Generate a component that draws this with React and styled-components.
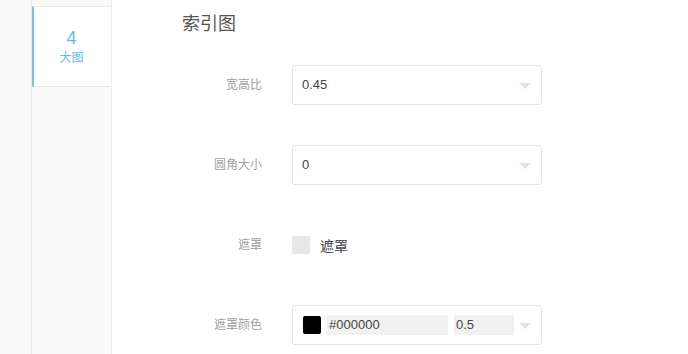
import React from "react";
import styled, { createGlobalStyle } from "styled-components";

const Global = createGlobalStyle`
  html, body { margin: 0; padding: 0; background: #fff; }
  body { font-family: "Liberation Sans", "Noto Sans CJK SC", sans-serif; }
  * { box-sizing: border-box; }
`;

const Page = styled.div`
  display: flex;
  height: 354px;
  overflow: hidden;
`;

const Gutter = styled.div`
  width: 31px;
  background: #f9f9f9;
`;

const Sidebar = styled.div`
  width: 81px;
  background: #f9f9f9;
  border-left: 1px solid #e6e6e6;
  border-right: 1px solid #ececec;
  padding-top: 6px;
`;

const NavItem = styled.div`
  height: 81px;
  background: ${(p) => (p.$active ? "#fff" : "transparent")};
  border-top: 1px solid #ececec;
  border-bottom: 1px solid #e6e6e6;
  border-left: 2px solid ${(p) => (p.$active ? "#7cc0e8" : "transparent")};
  display: flex;
  flex-direction: column;
  align-items: center;
  justify-content: center;
  color: #6cb8e4;
  padding-right: 2px;
`;

const NavNum = styled.div`
  font-size: 18px;
  line-height: 20px;
  font-weight: 300;
`;

const NavLabel = styled.div`
  font-size: 12px;
  line-height: 16px;
  margin-top: 1px;
  font-family: "Noto Sans CJK SC", sans-serif;
`;

const Main = styled.div`
  flex: 1;
  padding: 10px 0 0 70px;
`;

const Title = styled.div`
  font-size: 18px;
  line-height: 24px;
  color: #555;
  margin-bottom: 31px;
  font-family: "Noto Sans CJK SC", sans-serif;
`;

const Form = styled.div`
  display: flex;
  flex-direction: column;
  gap: 40px;
`;

const Row = styled.div`
  display: flex;
  align-items: center;
  height: 40px;
`;

const Label = styled.div`
  width: 80px;
  margin-right: 30px;
  text-align: right;
  font-size: 12px;
  color: #a0a0a0;
  font-family: "Noto Sans CJK SC", sans-serif;
  padding-bottom: 3px;
`;

const Select = styled.div`
  width: 250px;
  height: 40px;
  border: 1px solid #e6e6e6;
  border-radius: 3px;
  display: flex;
  align-items: center;
  padding: 0 10px 0 9px;
  font-size: 13px;
  color: #444;
`;

const Value = styled.div`
  flex: 1;
  padding-bottom: 2px;
`;

const Arrow = styled.div`
  width: 0;
  height: 0;
  border-left: 6px solid transparent;
  border-right: 6px solid transparent;
  border-top: 6px solid #e2e2e2;
  margin-top: 1px;
`;

const Check = styled.div`
  width: 18px;
  height: 18px;
  background: #e8e8e8;
  border-radius: 2px;
`;

const CheckText = styled.div`
  margin-left: 10px;
  font-size: 14px;
  color: #444;
  font-family: "Noto Sans CJK SC", sans-serif;
`;

const Swatch = styled.div`
  width: 18px;
  height: 18px;
  background: ${(p) => p.$color};
  border-radius: 2px;
  margin-left: 1px;
`;

const Field = styled.div`
  width: ${(p) => p.$w}px;
  height: 20px;
  background: #f1f1f1;
  margin-left: ${(p) => p.$ml}px;
  padding-left: 2px;
  font-size: 13px;
  color: #444;
  line-height: 19px;
`;

const Spacer = styled.div`
  flex: 1;
`;

export default function App() {
  return (
    <>
      <Global />
      <Page>
        <Gutter />
        <Sidebar>
          <NavItem $active>
            <NavNum>4</NavNum>
            <NavLabel>大图</NavLabel>
          </NavItem>
        </Sidebar>
        <Main>
          <Title>索引图</Title>
          <Form>
            <Row>
              <Label>宽高比</Label>
              <Select>
                <Value>0.45</Value>
                <Arrow />
              </Select>
            </Row>
            <Row>
              <Label>圆角大小</Label>
              <Select>
                <Value>0</Value>
                <Arrow />
              </Select>
            </Row>
            <Row>
              <Label>遮罩</Label>
              <Check />
              <CheckText>遮罩</CheckText>
            </Row>
            <Row>
              <Label>遮罩颜色</Label>
              <Select>
                <Swatch $color="#000" />
                <Field $w={121} $ml={6}>#000000</Field>
                <Field $w={60} $ml={6}>0.5</Field>
                <Spacer />
                <Arrow />
              </Select>
            </Row>
          </Form>
        </Main>
      </Page>
    </>
  );
}
